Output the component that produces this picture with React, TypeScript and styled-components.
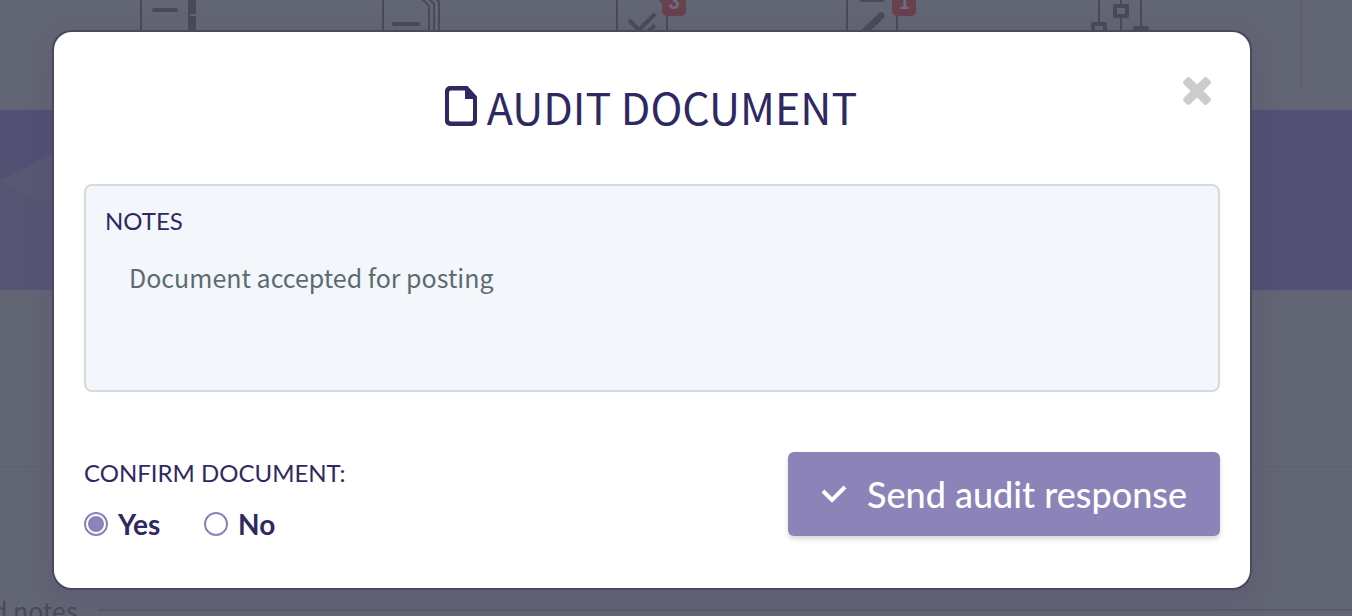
import React, { useState } from "react";
import styled, { createGlobalStyle } from "styled-components";

const ink = "#2f2962";
const violet = "#8c83b9";
const line = "#484a5b";
const sans = `Lato, "Liberation Sans", sans-serif`;
const source = `"Noto Sans CJK SC", "Noto Sans", sans-serif`;

const GlobalStyle = createGlobalStyle`
  *, *::before, *::after { box-sizing: border-box; }
  body { margin: 0; background: #626573; font-family: ${sans}; }
`;

const Page = styled.div`
  position: relative;
  min-height: 100vh;
  overflow: hidden;
`;

const Backdrop = styled.div`
  position: absolute;
  inset: 0;
  display: flex;
  flex-direction: column;
  overflow: hidden;
`;

const Toolbar = styled.header`
  display: flex;
  flex: none;
  height: 110px;
  padding-left: 136px;
`;

const Tools = styled.div`
  display: flex;
  flex: none;
  gap: 156px;
  width: 1166px;
  height: 90px;
  border-right: 2px solid #5c5e6e;
`;

const Tool = styled.button`
  position: relative;
  flex: none;
  width: 80px;
  height: 60px;
  padding: 0;
  border: 0;
  background: none;
  color: ${line};

  svg {
    display: block;
  }
`;

const Badge = styled.span<{ $left: number }>`
  position: absolute;
  top: -8px;
  left: ${(p) => p.$left}px;
  width: 24px;
  height: 24px;
  border-radius: 5px;
  background: #67414d;
  color: #6d6b7d;
  font: 900 20px/18px ${sans};
  text-align: center;
`;

const Banner = styled.div`
  flex: none;
  height: 180px;
  background: #525073;

  svg {
    display: block;
  }
`;

const Panel = styled.section`
  flex: none;
  height: 178px;
  border-bottom: 2px solid #5f6271;
`;

const NotesHeading = styled.div`
  display: flex;
  flex: none;
  align-items: center;
  gap: 20px;
  margin-top: 122px;
  margin-left: -8px;
  color: ${line};
  font: 400 25px/40px ${source};

  &::after {
    content: "";
    flex: 1;
    height: 2px;
    background: #585a6a;
  }
`;

const Dialog = styled.form`
  position: relative;
  display: flex;
  flex-direction: column;
  margin: 32px 102px 28px 54px;
  padding: 44px 30px 52px;
  border-radius: 18px;
  background: #fff;
  box-shadow: 0 0 0 2px ${line}, 0 8px 28px rgba(72, 62, 122, 0.26);
`;

const DialogHeader = styled.div`
  display: grid;
  grid-template-columns: 1fr auto 1fr;
  align-items: start;
  height: 64px;
`;

const Title = styled.h1`
  display: flex;
  grid-column: 2;
  align-items: center;
  gap: 10px;
  margin: 0;
  padding-right: 2px;
  color: ${ink};
  font: 400 43px/60px ${source};
  white-space: nowrap;

  svg {
    flex: none;
  }
`;

const CloseButton = styled.button`
  display: flex;
  align-items: center;
  justify-content: center;
  justify-self: end;
  width: 46px;
  height: 30px;
  padding: 0;
  border: 0;
  background: none;
  color: #ccc;
`;

const NotesField = styled.div`
  display: flex;
  flex-direction: column;
  height: 208px;
  margin-top: 44px;
  padding: 17px 19px;
  border: 2px solid #d5dade;
  border-radius: 8px;
  background: #f3f7fc;
`;

const FieldLabel = styled.label`
  color: ${ink};
  font: 400 24px/36px ${sans};
`;

const NotesInput = styled.textarea`
  flex: 1;
  margin: 18px 0 0;
  padding: 0 24px;
  border: 0;
  outline: 0;
  background: none;
  color: #5b6b70;
  font: 400 25px/40px ${source};
  resize: none;
`;

const Footer = styled.div`
  display: flex;
  align-items: flex-start;
  justify-content: space-between;
  margin-top: 60px;
`;

const Choices = styled.fieldset`
  margin: 0;
  padding: 3px 0 0;
  border: 0;
`;

const Legend = styled.div`
  color: ${ink};
  font: 400 24px/36px ${sans};
`;

const Options = styled.div`
  display: flex;
  margin-top: 21px;
`;

const Option = styled.label`
  display: flex;
  align-items: center;
  gap: 10px;
  min-width: 120px;
  color: ${ink};
  font: 700 28px/24px ${sans};
`;

const Radio = styled.input`
  appearance: none;
  width: 24px;
  height: 24px;
  margin: 0;
  padding: 2px;
  border: 2px solid ${violet};
  border-radius: 50%;
  background: #fff;

  &:checked {
    background: ${violet};
    background-clip: content-box;
  }
`;

const SendButton = styled.button`
  display: flex;
  align-items: center;
  gap: 20px;
  height: 84px;
  padding: 0 33px;
  border: 0;
  border-radius: 6px;
  background: ${violet};
  box-shadow: 0 3px 5px rgba(0, 0, 0, 0.16);
  color: #fff;
  font: 500 36px/84px ${sans};
  white-space: nowrap;
`;

const ToolDrawing = ({ children }: { children: React.ReactNode }) => (
  <svg width="80" height="60" viewBox="0 0 80 60" fill="none" stroke="currentColor" strokeWidth="2">
    {children}
  </svg>
);

export default function App() {
  const [notes, setNotes] = useState("Document accepted for posting");
  const [answer, setAnswer] = useState("yes");

  return (
    <Page>
      <GlobalStyle />
      <Backdrop aria-hidden="true">
        <Toolbar>
          <Tools>
            <Tool type="button" tabIndex={-1} aria-label="Journal">
              <ToolDrawing>
                <path d="M5 0V50H52" />
                <path d="M18 10H40" strokeWidth="4" strokeLinecap="round" />
                <path d="M52 0H60V14H54V16H60V50H52Z" fill="currentColor" stroke="none" />
              </ToolDrawing>
            </Tool>
            <Tool type="button" tabIndex={-1} aria-label="Documents">
              <ToolDrawing>
                <path d="M11 0V50H57V6L50 -1M62 50V4L56 -2M67 50V2L61 -4" />
                <path d="M22 24H46" strokeWidth="4" strokeLinecap="round" />
              </ToolDrawing>
            </Tool>
            <Tool type="button" tabIndex={-1} aria-label="Approvals">
              <ToolDrawing>
                <path d="M9 0V50H59V7L50 -2" />
                <path d="M21 20L31 30L47 14M21 31L31 41L47 25" strokeWidth="4" />
              </ToolDrawing>
              <Badge $left={54}>3</Badge>
            </Tool>
            <Tool type="button" tabIndex={-1} aria-label="Drafts">
              <ToolDrawing>
                <path d="M3 0V50H53V0" />
                <path d="M18 0H38" strokeWidth="4" strokeLinecap="round" />
                <path d="M18 34L37 16" strokeWidth="7" strokeLinecap="round" />
              </ToolDrawing>
              <Badge $left={48}>1</Badge>
            </Tool>
            <Tool type="button" tabIndex={-1} aria-label="Settings">
              <ToolDrawing>
                <path d="M19 0V24M41 0V4M41 17V50M61 0V28" />
                <g strokeWidth="4" strokeLinejoin="round">
                  <rect x="13" y="24" width="12" height="10" />
                  <rect x="35" y="6" width="12" height="10" />
                  <rect x="55" y="28" width="12" height="10" />
                </g>
              </ToolDrawing>
            </Tool>
          </Tools>
        </Toolbar>
        <Banner>
          <svg width="160" height="180" viewBox="0 0 160 180">
            <path d="M0 71L160 -14V180H0Z" fill="#575872" />
            <path d="M0 71L160 151V180H0Z" fill="#555573" />
          </svg>
        </Banner>
        <Panel />
        <NotesHeading>d notes</NotesHeading>
      </Backdrop>

      <Dialog role="dialog" aria-labelledby="dialog-title" onSubmit={(e) => e.preventDefault()}>
        <DialogHeader>
          <Title id="dialog-title">
            <svg width="32" height="40" viewBox="0 0 32 40" fill="currentColor" aria-hidden="true">
              <path
                fillRule="evenodd"
                d="M5 0H22.5L32 10.5V35a5 5 0 0 1-5 5H5a5 5 0 0 1-5-5V5a5 5 0 0 1 5-5ZM6 4.500a2 2 0 0 0-2 2V33.500a2 2 0 0 0 2 2H26a2 2 0 0 0 2-2V13H20V4.500Z"
              />
            </svg>
            AUDIT DOCUMENT
          </Title>
          <CloseButton type="button" aria-label="Close">
            <svg width="28" height="28" viewBox="302 366 1188 1188" fill="currentColor">
              <path d="M1490 1322q0 40-28 68l-136 136q-28 28-68 28t-68-28l-294-294-294 294q-28 28-68 28t-68-28l-136-136q-28-28-28-68t28-68l294-294-294-294q-28-28-28-68t28-68l136-136q28-28 68-28t68 28l294 294 294-294q28-28 68-28t68 28l136 136q28 28 28 68t-28 68l-294 294 294 294q28 28 28 68z" />
            </svg>
          </CloseButton>
        </DialogHeader>

        <NotesField>
          <FieldLabel htmlFor="notes">NOTES</FieldLabel>
          <NotesInput id="notes" value={notes} onChange={(e) => setNotes(e.target.value)} />
        </NotesField>

        <Footer>
          <Choices aria-labelledby="confirm-label">
            <Legend id="confirm-label">CONFIRM DOCUMENT:</Legend>
            <Options>
              <Option>
                <Radio type="radio" name="confirm" checked={answer === "yes"} onChange={() => setAnswer("yes")} />
                Yes
              </Option>
              <Option>
                <Radio type="radio" name="confirm" checked={answer === "no"} onChange={() => setAnswer("no")} />
                No
              </Option>
            </Options>
          </Choices>
          <SendButton type="submit">
            <svg width="26" height="20" viewBox="0 0 26 20" fill="none" stroke="currentColor" strokeWidth="4" aria-hidden="true">
              <path d="M2 7L11 16L24 3" />
            </svg>
            Send audit response
          </SendButton>
        </Footer>
      </Dialog>
    </Page>
  );
}
